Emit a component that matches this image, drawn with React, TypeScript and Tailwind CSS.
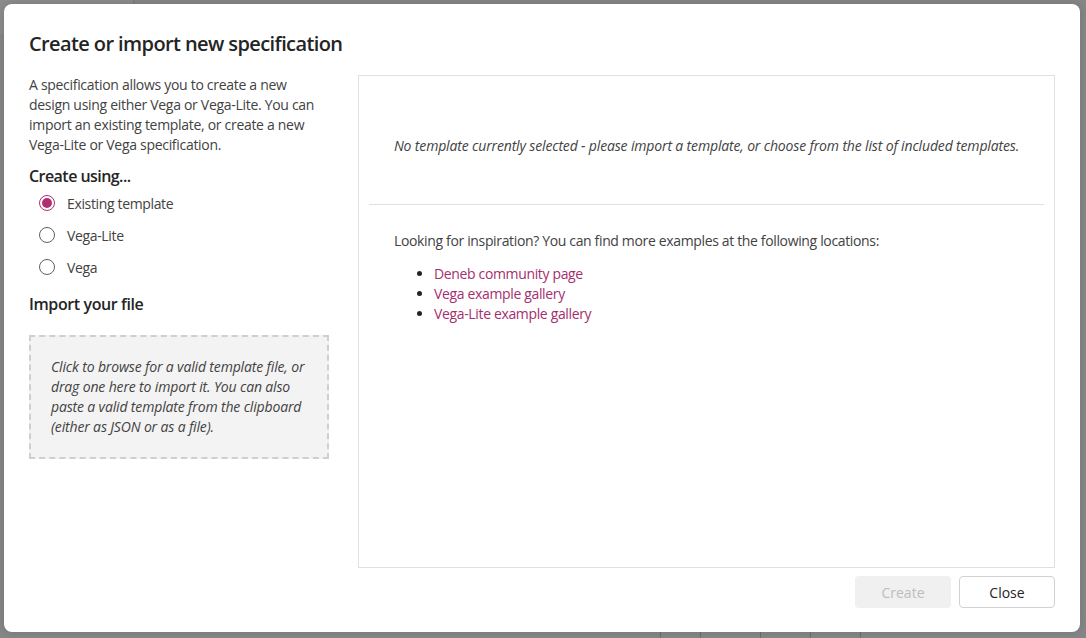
import React from "react";

const font = { fontFamily: '"Open Sans", "Noto Sans", sans-serif' };

function Radio({ label, checked }: { label: string; checked?: boolean }) {
  return (
    <label className="flex h-[32px] items-center pl-[10px] gap-[12px]">
      <span
        className={
          "flex h-[16px] w-[16px] items-center justify-center rounded-full border " +
          (checked ? "border-[#b0306f]" : "border-[#616161]")
        }
      >
        {checked && <span className="h-[10px] w-[10px] rounded-full bg-[#b0306f]" />}
      </span>
      <span className="text-[14px] tracking-[-0.35px] text-[#424242]">{label}</span>
    </label>
  );
}

export default function App() {
  return (
    <div
      className="relative h-[638px] w-[1086px] overflow-hidden bg-[#868686] pl-[4px] pt-[4px]"
      style={font}
    >
      {/* faint host page behind the dialog */}
      <div className="absolute left-0 top-0 h-[34px] w-[134px] bg-[#8c8c8c] border-r border-[#7a7a7a]" />
      <div className="absolute bottom-0 left-0 right-0 flex h-[6px] text-[10px] text-[#3a3a3a]">
        <div className="w-[660px]" />
        <div className="w-[40px] border-l border-[#6e6e6e]" />
        <div className="w-[60px] border-l border-[#6e6e6e]" />
        <div className="w-[50px] border-l border-[#6e6e6e]" />
        <div className="w-[50px] border-l border-[#6e6e6e]" />
        <div className="w-[60px] border-l border-[#6e6e6e]" />
      </div>

      <div className="relative flex h-[628px] w-[1076px] flex-col rounded-[8px] bg-white px-[25px] pb-[24px] pt-[26px] shadow-[0_0_8px_rgba(0,0,0,0.15)]">
        <h1 className="h-[28px] text-[20px] font-semibold leading-[28px] tracking-[-0.6px] text-[#242424]">
          Create or import new specification
        </h1>

        <div className="mt-[17px] flex gap-[29px]">
          {/* left column */}
          <div className="flex w-[300px] flex-col">
            <p className="text-[14px] leading-[20px] tracking-[-0.3px] text-[#424242]">
              A specification allows you to create a new
              <br />
              design using either Vega or Vega-Lite. You can
              <br />
              import an existing template, or create a new
              <br />
              Vega-Lite or Vega specification.
            </p>
            <h2 className="mt-[10px] text-[16px] font-semibold leading-[22px] tracking-[-0.55px] text-[#242424]">
              Create using...
            </h2>
            <Radio label="Existing template" checked />
            <Radio label="Vega-Lite" />
            <Radio label="Vega" />
            <h2 className="mt-[10px] text-[16px] font-semibold leading-[22px] tracking-[-0.4px] text-[#242424]">
              Import your file
            </h2>
            <div className="mt-[20px] h-[124px] border-2 border-dashed border-[#cfcfcf] bg-[#f3f3f3] px-[20px] py-[20px]">
              <p className="text-[14px] italic leading-[20px] tracking-[-0.15px] text-[#424242]">
                Click to browse for a valid template file, or
                <br />
                drag one here to import it. You can also
                <br />
                paste a valid template from the clipboard
                <br />
                (either as JSON or as a file).
              </p>
            </div>
          </div>

          {/* right panel */}
          <div className="flex h-[493px] flex-1 flex-col border border-[#e0e0e0]">
            <div className="flex h-[128px] items-center justify-center pt-[10px]">
              <p className="text-[14px] italic tracking-[-0.15px] text-[#424242]">
                No template currently selected - please import a template, or choose from the list of
                included templates.
              </p>
            </div>
            <div className="mx-[10px] border-t border-[#e0e0e0]" />
            <div className="pl-[35px] pt-[26px] text-[14px] leading-[20px] tracking-[-0.35px] text-[#424242]">
              <p>Looking for inspiration? You can find more examples at the following locations:</p>
              <ul className="mt-[13px] list-disc pl-[40px] marker:text-[#242424]">
                <li>
                  <a className="text-[#a52f6e]">Deneb community page</a>
                </li>
                <li>
                  <a className="text-[#a52f6e]">Vega example gallery</a>
                </li>
                <li>
                  <a className="text-[#a52f6e]">Vega-Lite example gallery</a>
                </li>
              </ul>
            </div>
          </div>
        </div>

        <div className="mt-[8px] flex justify-end gap-[8px]">
          <button
            disabled
            className="h-[32px] w-[96px] rounded-[4px] bg-[#f0f0f0] text-[14px] text-[#bdbdbd]"
          >
            Create
          </button>
          <button className="h-[32px] w-[96px] rounded-[4px] border border-[#d1d1d1] bg-white text-[14px] text-[#242424]">
            Close
          </button>
        </div>
      </div>
    </div>
  );
}
